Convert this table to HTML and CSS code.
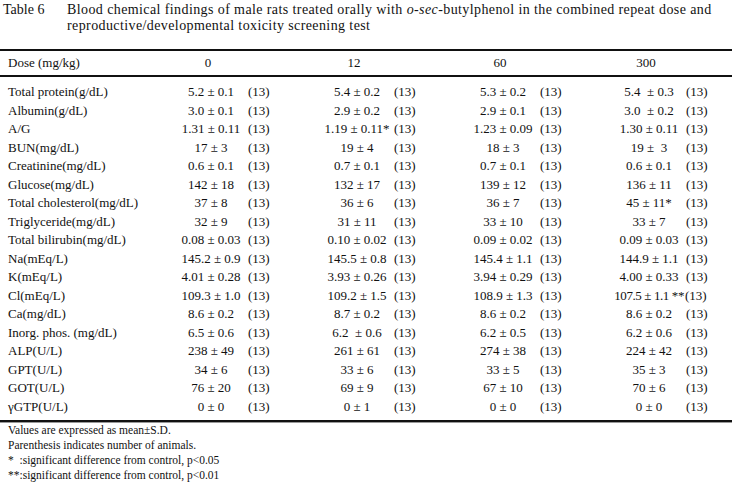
FILE: index.html
```html
<!DOCTYPE html>
<html>
<head>
<meta charset="utf-8">
<link rel="stylesheet" href="styles.css">
</head>
<body>
<div class="page">
  <div class="caption">
    <div class="cap-label">Table 6</div>
    <div class="cap-text">Blood chemical findings of male rats treated orally with <i>o-sec</i>-butylphenol in the combined repeat dose and<br>reproductive/developmental toxicity screening test</div>
  </div>
  <table class="data">
    <colgroup>
      <col class="c-label"><col class="c-val"><col class="c-n"><col class="c-val"><col class="c-n"><col class="c-val"><col class="c-n"><col class="c-val"><col class="c-nlast">
    </colgroup>
    <thead>
      <tr><th class="lbl">Dose (mg/kg)</th><th class="dose">0</th><th></th><th class="dose">12</th><th></th><th class="dose">60</th><th></th><th class="dose">300</th><th></th></tr>
    </thead>
    <tbody>
      <tr class="first"><td class="lbl">Total protein(g/dL)</td><td class="v">5.2 ± 0.1</td><td class="n">(13)</td><td class="v">5.4 ± 0.2</td><td class="n">(13)</td><td class="v">5.3 ± 0.2</td><td class="n">(13)</td><td class="v">5.4&nbsp; ± 0.3</td><td class="n">(13)</td></tr>
      <tr><td class="lbl">Albumin(g/dL)</td><td class="v">3.0 ± 0.1</td><td class="n">(13)</td><td class="v">2.9 ± 0.2</td><td class="n">(13)</td><td class="v">2.9 ± 0.1</td><td class="n">(13)</td><td class="v">3.0&nbsp; ± 0.2</td><td class="n">(13)</td></tr>
      <tr><td class="lbl">A/G</td><td class="v">1.31 ± 0.11</td><td class="n">(13)</td><td class="v">1.19 ± 0.11*</td><td class="n">(13)</td><td class="v">1.23 ± 0.09</td><td class="n">(13)</td><td class="v">1.30 ± 0.11</td><td class="n">(13)</td></tr>
      <tr><td class="lbl">BUN(mg/dL)</td><td class="v">17 ± 3</td><td class="n">(13)</td><td class="v">19 ± 4</td><td class="n">(13)</td><td class="v">18 ± 3</td><td class="n">(13)</td><td class="v">19 ±&nbsp; 3</td><td class="n">(13)</td></tr>
      <tr><td class="lbl">Creatinine(mg/dL)</td><td class="v">0.6 ± 0.1</td><td class="n">(13)</td><td class="v">0.7 ± 0.1</td><td class="n">(13)</td><td class="v">0.7 ± 0.1</td><td class="n">(13)</td><td class="v">0.6 ± 0.1</td><td class="n">(13)</td></tr>
      <tr><td class="lbl">Glucose(mg/dL)</td><td class="v">142 ± 18</td><td class="n">(13)</td><td class="v">132 ± 17</td><td class="n">(13)</td><td class="v">139 ± 12</td><td class="n">(13)</td><td class="v">136 ± 11</td><td class="n">(13)</td></tr>
      <tr><td class="lbl">Total cholesterol(mg/dL)</td><td class="v">37 ± 8</td><td class="n">(13)</td><td class="v">36 ± 6</td><td class="n">(13)</td><td class="v">36 ± 7</td><td class="n">(13)</td><td class="v">45 ± 11*</td><td class="n">(13)</td></tr>
      <tr><td class="lbl">Triglyceride(mg/dL)</td><td class="v">32 ± 9</td><td class="n">(13)</td><td class="v">31 ± 11</td><td class="n">(13)</td><td class="v">33 ± 10</td><td class="n">(13)</td><td class="v">33 ± 7</td><td class="n">(13)</td></tr>
      <tr><td class="lbl">Total bilirubin(mg/dL)</td><td class="v">0.08 ± 0.03</td><td class="n">(13)</td><td class="v">0.10 ± 0.02</td><td class="n">(13)</td><td class="v">0.09 ± 0.02</td><td class="n">(13)</td><td class="v">0.09 ± 0.03</td><td class="n">(13)</td></tr>
      <tr><td class="lbl">Na(mEq/L)</td><td class="v">145.2 ± 0.9</td><td class="n">(13)</td><td class="v">145.5 ± 0.8</td><td class="n">(13)</td><td class="v">145.4 ± 1.1</td><td class="n">(13)</td><td class="v">144.9 ± 1.1</td><td class="n">(13)</td></tr>
      <tr><td class="lbl">K(mEq/L)</td><td class="v">4.01 ± 0.28</td><td class="n">(13)</td><td class="v">3.93 ± 0.26</td><td class="n">(13)</td><td class="v">3.94 ± 0.29</td><td class="n">(13)</td><td class="v">4.00 ± 0.33</td><td class="n">(13)</td></tr>
      <tr><td class="lbl">Cl(mEq/L)</td><td class="v">109.3 ± 1.0</td><td class="n">(13)</td><td class="v">109.2 ± 1.5</td><td class="n">(13)</td><td class="v">108.9 ± 1.3</td><td class="n">(13)</td><td class="v tight">107.5 ± 1.1 **</td><td class="n nopad">(13)</td></tr>
      <tr><td class="lbl">Ca(mg/dL)</td><td class="v">8.6 ± 0.2</td><td class="n">(13)</td><td class="v">8.7 ± 0.2</td><td class="n">(13)</td><td class="v">8.6 ± 0.2</td><td class="n">(13)</td><td class="v">8.6 ± 0.2</td><td class="n">(13)</td></tr>
      <tr><td class="lbl">Inorg. phos. (mg/dL)</td><td class="v">6.5 ± 0.6</td><td class="n">(13)</td><td class="v">6.2&nbsp; ± 0.6</td><td class="n">(13)</td><td class="v">6.2 ± 0.5</td><td class="n">(13)</td><td class="v">6.2 ± 0.6</td><td class="n">(13)</td></tr>
      <tr><td class="lbl">ALP(U/L)</td><td class="v">238 ± 49</td><td class="n">(13)</td><td class="v">261 ± 61</td><td class="n">(13)</td><td class="v">274 ± 38</td><td class="n">(13)</td><td class="v">224 ± 42</td><td class="n">(13)</td></tr>
      <tr><td class="lbl">GPT(U/L)</td><td class="v">34 ± 6</td><td class="n">(13)</td><td class="v">33 ± 6</td><td class="n">(13)</td><td class="v">33 ± 5</td><td class="n">(13)</td><td class="v">35 ± 3</td><td class="n">(13)</td></tr>
      <tr><td class="lbl">GOT(U/L)</td><td class="v">76 ± 20</td><td class="n">(13)</td><td class="v">69 ± 9</td><td class="n">(13)</td><td class="v">67 ± 10</td><td class="n">(13)</td><td class="v">70 ± 6</td><td class="n">(13)</td></tr>
      <tr class="last"><td class="lbl">γGTP(U/L)</td><td class="v">0 ± 0</td><td class="n">(13)</td><td class="v">0 ± 1</td><td class="n">(13)</td><td class="v">0 ± 0</td><td class="n">(13)</td><td class="v">0 ± 0</td><td class="n">(13)</td></tr>
    </tbody>
  </table>
  <div class="notes">
    <div>Values are expressed as mean±S.D.</div>
    <div>Parenthesis indicates number of animals.</div>
    <div>*&nbsp; :significant difference from control, p&lt;0.05</div>
    <div>**:significant difference from control, p&lt;0.01</div>
  </div>
</div>
</body>
</html>
```

FILE: styles.css
```css
html, body {
  margin: 0;
  padding: 0;
  background: #fff;
}
body {
  font-family: "Liberation Serif", "Times New Roman", serif;
  color: #111;
  width: 732px;
  height: 485px;
  overflow: hidden;
}
.page {
  display: flex;
  flex-direction: column;
}
.caption {
  display: flex;
  font-size: 14px;
  line-height: 16px;
  padding-top: 2px;
  height: 32px;
}
.cap-label {
  width: 64px;
  padding-left: 3px;
  flex: none;
}
.cap-text {
  flex: 1;
  white-space: nowrap;
  letter-spacing: 0.4px;
}
.data {
  margin-top: 15px;
  width: 732px;
  table-layout: fixed;
  border-collapse: collapse;
  font-size: 13px;
  border-top: 2px solid #111;
}
.c-label { width: 175px; }
.c-val { width: 72px; }
.c-n { width: 74px; }
.c-nlast { width: 47px; }
.data th, .data td {
  padding: 0;
  white-space: nowrap;
  font-weight: normal;
  line-height: 18.5px;
}
.data thead th {
  line-height: 24px;
  border-bottom: 2px solid #111;
  text-align: left;
}
.data thead th.dose {
  text-align: center;
  padding-right: 6px;
}
.data tbody tr.first td {
  padding-top: 6px;
  border-top: 1px solid #999;
}
.data tbody tr.last td {
  padding-bottom: 4px;
  border-bottom: 2px solid #111;
}
.data td.lbl, .data th.lbl {
  padding-left: 8px;
  text-align: left;
}
.data td.v {
  text-align: center;
}
.data td.v.tight {
  text-align: right;
  letter-spacing: -0.4px;
  padding-right: 1px;
}
.data td.n {
  text-align: left;
  padding-left: 1px;
}
.data td.n.nopad {
  padding-left: 0;
}
.notes {
  border-top: 1px solid #999;
  padding: 0 0 0 8px;
  font-size: 11.5px;
  line-height: 15px;
}
```
